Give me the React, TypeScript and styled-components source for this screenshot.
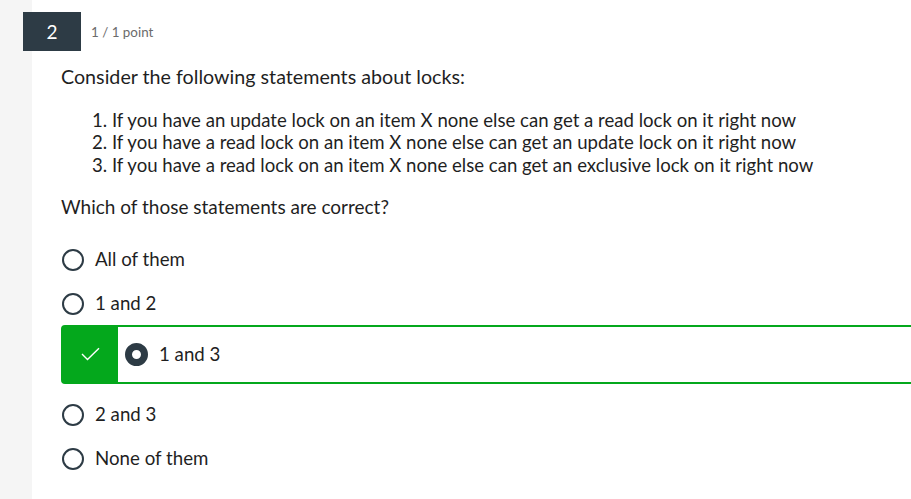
import React from "react";
import styled, { createGlobalStyle } from "styled-components";

const GlobalStyle = createGlobalStyle`
	html, body {
		margin: 0;
		padding: 0;
		overflow: hidden;
	}
	body {
		font-family: Lato, "Open Sans", sans-serif;
		color: #1f1f1f;
		background: linear-gradient(to right, #f5f5f5 0, #f5f5f5 32px, #ffffff 32px);
		min-height: 100vh;
	}
`;

const StyledPage = styled.div`
	padding: 12px 0 0 23px;
`;

const StyledHeader = styled.div`
	display: flex;
	flex-direction: row;
	align-items: center;
	gap: 10px;
`;

const StyledBadge = styled.div`
	width: 58px;
	height: 39px;
	background: #2d3b45;
	color: #ffffff;
	font-size: 19px;
	display: flex;
	align-items: center;
	justify-content: center;
`;

const StyledPoints = styled.span`
	font-size: 13.4px;
	color: #6b6b6b;
`;

const StyledBody = styled.div`
	margin-left: 38px;
	font-size: 18.6px;
	line-height: 22.5px;
`;

const StyledPrompt = styled.p`
	margin: 15px 0 0;
	font-size: 19.7px;
`;

const StyledStatements = styled.ol`
	margin: 20px 0 0;
	padding-left: 31px;
	list-style: none;
`;

const StyledQuestion = styled.p`
	margin: 20px 0 0;
	font-size: 19px;
`;

const StyledOptions = styled.div`
	display: flex;
	flex-direction: column;
	margin: 19px -40px 0 0;
	font-size: 18.7px;
`;

const StyledOption = styled.label`
	display: flex;
	flex-direction: row;
	align-items: center;
	gap: 11px;
	height: 44px;
	padding-left: 1px;
`;

const StyledRadio = styled.span<{ $checked?: boolean }>`
	box-sizing: border-box;
	width: ${(p) => (p.$checked ? 23 : 22)}px;
	height: ${(p) => (p.$checked ? 23 : 22)}px;
	border-radius: 50%;
	border: ${(p) => (p.$checked ? 7.5 : 2)}px solid #2d3b45;
	background: #ffffff;
	flex-shrink: 0;
`;

const StyledCorrect = styled.div`
	display: flex;
	flex-direction: row;
	align-items: center;
	height: 59px;
	box-sizing: border-box;
	border: 2px solid #04a81c;
	border-radius: 4px 0 0 4px;
	margin: -1px 0 9px;
`;

const StyledCheckBlock = styled.div`
	align-self: stretch;
	width: 55px;
	background: #04a81c;
	display: flex;
	align-items: center;
	justify-content: center;
	margin-right: 7px;
`;

const StyledCorrectLabel = styled.span`
	display: flex;
	align-items: center;
	gap: 11px;
`;

const options = ["All of them", "1 and 2", "1 and 3", "2 and 3", "None of them"];
const correct = "1 and 3";

const App = () => {
	return (
		<>
			<GlobalStyle />
			<StyledPage>
				<StyledHeader>
					<StyledBadge>2</StyledBadge>
					<StyledPoints>1 / 1 point</StyledPoints>
				</StyledHeader>

				<StyledBody>
					<StyledPrompt>Consider the following statements about locks:</StyledPrompt>

					<StyledStatements>
						<li>1. If you have an update lock on an item X none else can get a read lock on it right now</li>
						<li>2. If you have a read lock on an item X none else can get an update lock on it right now</li>
						<li>3. If you have a read lock on an item X none else can get an exclusive lock on it right now</li>
					</StyledStatements>

					<StyledQuestion>Which of those statements are correct?</StyledQuestion>

					<StyledOptions>
						{options.map((opt) =>
							opt === correct ? (
								<StyledCorrect key={opt}>
									<StyledCheckBlock>
										<svg width="19" height="14" viewBox="0 0 19 14" fill="none">
											<path d="M1 7 L6.5 12.5 L18 1.2" stroke="#ffffff" strokeWidth="1.4" />
										</svg>
									</StyledCheckBlock>
									<StyledCorrectLabel>
										<StyledRadio $checked />
										{opt}
									</StyledCorrectLabel>
								</StyledCorrect>
							) : (
								<StyledOption key={opt}>
									<StyledRadio />
									{opt}
								</StyledOption>
							)
						)}
					</StyledOptions>
				</StyledBody>
			</StyledPage>
		</>
	);
};

export default App;
